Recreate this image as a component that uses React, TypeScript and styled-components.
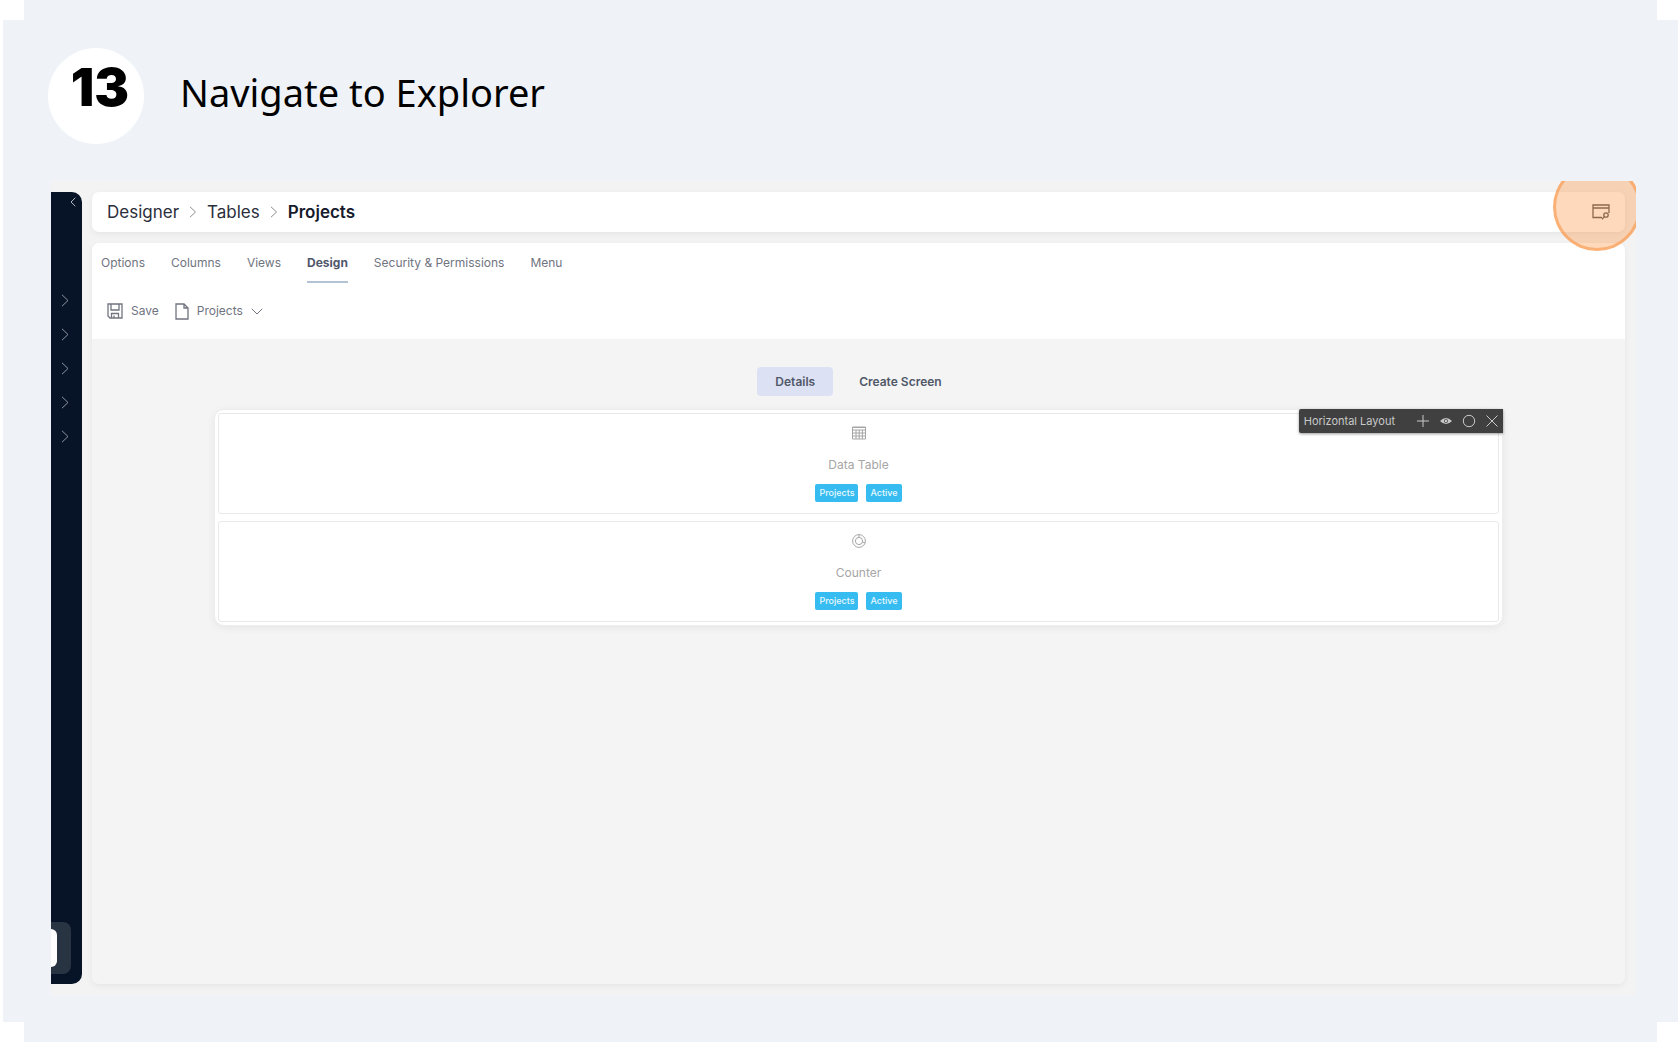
import React from "react";
import styled, { createGlobalStyle } from "styled-components";

const GlobalStyle = createGlobalStyle`
  *, *::before, *::after { box-sizing: border-box; }
  body { margin: 0; background: #fff; font-family: Inter, "Liberation Sans", sans-serif; }
  button { font: inherit; color: inherit; background: none; border: 0; padding: 0; margin: 0; cursor: pointer; }
  a { color: inherit; text-decoration: none; }
  svg { display: block; flex: none; }
`;

const Page = styled.div`
  display: flex;
  min-height: 100vh;
  padding: 0 2px 6px 3px;
`;

const StepCard = styled.article`
  position: relative;
  flex: 1;
  min-width: 0;
  display: flex;
  flex-direction: column;
  padding: 48px 42px 47px 48px;
  background: #eff3f8;
`;

const Corner = styled.span<{ $v: "top" | "bottom"; $h: "left" | "right" }>`
  position: absolute;
  ${(p) => p.$v}: 0;
  ${(p) => p.$h}: 0;
  width: 21px;
  height: 20px;
  background: #fff;
`;

const StepHeader = styled.header`
  display: flex;
  align-items: flex-start;
  gap: 36px;
  margin: 0 0 37px -3px;
`;

const StepNumber = styled.span`
  width: 96px;
  height: 96px;
  padding-top: 10px;
  padding-left: 8px;
  border-radius: 50%;
  background: #fff;
  color: #000;
  font-size: 52px;
  line-height: 60px;
  font-weight: 900;
  text-align: center;
`;

const StepTitle = styled.h1`
  margin: 0;
  padding-top: 17px;
  color: #000;
  font-family: "Noto Sans", sans-serif;
  font-size: 38px;
  line-height: 54px;
  font-weight: 400;
`;

const Screen = styled.section`
  position: relative;
  flex: 1;
  display: flex;
  gap: 10px;
  padding: 11px 11px 11px 0;
  overflow: hidden;
  background: #f3f3f3;
`;

const Sidebar = styled.nav`
  width: 31px;
  flex: none;
  display: flex;
  flex-direction: column;
  padding-bottom: 10px;
  border-radius: 0 10px 10px 0;
  background: #071427;
  color: #8d95a1;
`;

const CollapseButton = styled.button`
  align-self: flex-end;
  margin: 5px 6px 0 0;
`;

const SideList = styled.div`
  display: flex;
  flex-direction: column;
  align-items: center;
  gap: 20px;
  margin-top: 86px;
  padding-right: 3px;
`;

const SideButton = styled.button`
  height: 14px;
`;

const Account = styled.button`
  display: flex;
  align-items: center;
  width: 20px;
  height: 52px;
  margin-top: auto;
  border-radius: 0 8px 8px 0;
  background: #293443;
`;

const Avatar = styled.span`
  width: 6px;
  height: 38px;
  border-radius: 0 6px 6px 0;
  background: #fff;
`;

const Main = styled.div`
  flex: 1;
  min-width: 0;
  display: flex;
  flex-direction: column;
  gap: 11px;
`;

const TopBar = styled.div`
  display: flex;
  align-items: center;
  justify-content: space-between;
  height: 40px;
  padding: 0 15px;
  border-radius: 7px;
  background: #fff;
  box-shadow: 0 2px 6px rgba(0, 0, 0, 0.06);
`;

const Crumbs = styled.nav`
  display: flex;
  align-items: center;
  gap: 10px;
  color: #2b2e3b;
  font-size: 17px;
  line-height: 24px;
`;

const Crumb = styled.a<{ $current?: boolean }>`
  font-weight: ${(p) => (p.$current ? 600 : 400)};
  color: ${(p) => (p.$current ? "#161a2c" : "inherit")};
`;

const ExplorerButton = styled.button`
  color: #555;
`;

const Highlight = styled.span`
  position: absolute;
  top: -18px;
  right: -5px;
  width: 88px;
  height: 88px;
  border: 3px solid rgba(248, 150, 70, 0.6);
  border-radius: 50%;
  background: rgba(255, 145, 60, 0.34);
  pointer-events: none;
`;

const Workspace = styled.div`
  flex: 1;
  display: flex;
  flex-direction: column;
  border-radius: 7px;
  background: #f4f4f4;
  box-shadow: 0 2px 6px rgba(0, 0, 0, 0.06);
`;

const Controls = styled.div`
  height: 96px;
  padding: 7px 9px;
  border-radius: 7px 7px 0 0;
  background: #fff;
  color: #70747f;
  font-size: 12px;
  line-height: 24px;
`;

const Tabs = styled.div`
  display: flex;
  gap: 26px;
`;

const Tab = styled.button<{ $active?: boolean }>`
  height: 33px;
  padding-bottom: 6px;
  border-bottom: 2px solid ${(p) => (p.$active ? "#b3c3d6" : "transparent")};
  color: ${(p) => (p.$active ? "#50576b" : "inherit")};
  font-weight: ${(p) => (p.$active ? 700 : 400)};
`;

const Tools = styled.div`
  display: flex;
  gap: 16px;
  margin-top: 16px;
  padding-left: 6px;
`;

const ToolButton = styled.button`
  display: flex;
  align-items: center;
  gap: 8px;
`;

const Canvas = styled.div`
  padding: 28px 122px;
`;

const ScreenTabs = styled.div`
  display: flex;
  justify-content: center;
  gap: 8px;
  margin-bottom: 13px;
  color: #505869;
  font-size: 12px;
  line-height: 29px;
  font-weight: 600;
`;

const ScreenTab = styled.button<{ $active?: boolean }>`
  padding: 0 18px;
  border-radius: 4px;
  background: ${(p) => (p.$active ? "#dde1f4" : "transparent")};
`;

const LayoutPanel = styled.div`
  position: relative;
  display: flex;
  flex-direction: column;
  gap: 7px;
  padding: 3px;
  border: 1px solid #eee;
  border-radius: 10px;
  background: #fff;
  box-shadow: 0 2px 8px rgba(0, 0, 0, 0.06);
`;

const Widget = styled.div`
  display: flex;
  flex-direction: column;
  align-items: center;
  height: 101px;
  padding-top: 12px;
  border: 1px solid #e9e9e9;
  border-radius: 3px;
  color: #a6a6a6;
`;

const WidgetName = styled.span`
  margin: 15px 0 9px;
  font-size: 12px;
  line-height: 20px;
`;

const Tags = styled.div`
  display: flex;
  gap: 8px;
`;

const Tag = styled.span`
  padding: 0 4px;
  border-radius: 2px;
  background: #36bcf0;
  color: #e9f8fe;
  font-size: 9px;
  line-height: 18px;
  font-weight: 500;
`;

const LayoutBar = styled.div`
  position: absolute;
  top: -1px;
  right: -1px;
  display: flex;
  align-items: center;
  gap: 9px;
  height: 24px;
  padding: 0 4px 0 5px;
  border-radius: 2px 0 0 2px;
  background: #404040;
  color: #c9c9c9;
  font-size: 11px;
  box-shadow: 0 1px 3px rgba(0, 0, 0, 0.4);
`;

const LayoutName = styled.span`
  margin-right: 12px;
`;

const Icon = ({ w, h = w, children, sw = 1 }: { w: number; h?: number; sw?: number; children: React.ReactNode }) => (
  <svg width={w} height={h} viewBox={`0 0 ${w} ${h}`} fill="none" stroke="currentColor" strokeWidth={sw} aria-hidden="true">
    {children}
  </svg>
);

const CrumbArrow = () => (
  <Icon w={8} h={12}>
    <path d="M1 .8 6.500 6 1 11.200" stroke="#8b8b90" />
  </Icon>
);

const TableIcon = () => (
  <Icon w={14}>
    <path d="M.5 1h13v12H.5zM.5 4h13M.5 7h13M.5 10h13M4 4v9M7.200 4v9M10.400 4v9" />
    <path d="M.5 1.500h13" />
  </Icon>
);

const CounterIcon = () => (
  <Icon w={14}>
    <circle cx="7" cy="7" r="6.400" />
    <circle cx="7" cy="7" r="3.600" />
    <path d="M7 .6v3M10.400 8l2.800 1" />
  </Icon>
);

const widgets = [
  { name: "Data Table", icon: <TableIcon /> },
  { name: "Counter", icon: <CounterIcon /> },
];

const sections = ["Section 1", "Section 2", "Section 3", "Section 4", "Section 5"];
const tabs = ["Options", "Columns", "Views", "Design", "Security & Permissions", "Menu"];

export default function App() {
  return (
    <>
      <GlobalStyle />
      <Page>
        <StepCard>
          <Corner $v="top" $h="left" />
          <Corner $v="top" $h="right" />
          <Corner $v="bottom" $h="left" />
          <Corner $v="bottom" $h="right" />
          <StepHeader>
            <StepNumber>13</StepNumber>
            <StepTitle>Navigate to Explorer</StepTitle>
          </StepHeader>
          <Screen>
            <Sidebar>
              <CollapseButton aria-label="Collapse">
                <Icon w={6} h={10}>
                  <path d="M5.300.8 1 5l4.300 4.200" stroke="#b4bac2" />
                </Icon>
              </CollapseButton>
              <SideList>
                {sections.map((s) => (
                  <SideButton key={s} aria-label={s}>
                    <Icon w={8} h={13}>
                      <path d="M1 .8 7 6.500 1 12.200" />
                    </Icon>
                  </SideButton>
                ))}
              </SideList>
              <Account aria-label="Account">
                <Avatar />
              </Account>
            </Sidebar>
            <Main>
              <TopBar>
                <Crumbs aria-label="Breadcrumb">
                  <Crumb href="#designer">Designer</Crumb>
                  <CrumbArrow />
                  <Crumb href="#tables">Tables</Crumb>
                  <CrumbArrow />
                  <Crumb href="#projects" $current>Projects</Crumb>
                </Crumbs>
                <ExplorerButton aria-label="Explorer">
                  <Icon w={18} h={16} sw={1.3}>
                    <path d="M10 13.500H1V1h16v8M1 4h16" />
                    <circle cx="14" cy="11" r="2.200" />
                    <path d="m12.400 12.600-2.400 2.700" />
                  </Icon>
                </ExplorerButton>
              </TopBar>
              <Workspace>
                <Controls>
                  <Tabs role="tablist">
                    {tabs.map((t) => (
                      <Tab key={t} role="tab" aria-selected={t === "Design"} $active={t === "Design"}>
                        {t}
                      </Tab>
                    ))}
                  </Tabs>
                  <Tools>
                    <ToolButton>
                      <Icon w={16} sw={1.3}>
                        <path d="M1 1h14v14H3l-2-2zM4 1v6h8V1M4.500 15v-4.500h7V15M7 15v-2.500" />
                      </Icon>
                      Save
                    </ToolButton>
                    <ToolButton>
                      <Icon w={14} h={17} sw={1.3}>
                        <path d="M1 1h8l4 4v11H1zM9 1v4h4" />
                      </Icon>
                      Projects
                      <Icon w={12} h={7}>
                        <path d="M.8.8 6 6 11.200.8" />
                      </Icon>
                    </ToolButton>
                  </Tools>
                </Controls>
                <Canvas>
                  <ScreenTabs role="tablist">
                    <ScreenTab role="tab" aria-selected $active>Details</ScreenTab>
                    <ScreenTab role="tab" aria-selected={false}>Create Screen</ScreenTab>
                  </ScreenTabs>
                  <LayoutPanel>
                    {widgets.map((w) => (
                      <Widget key={w.name}>
                        {w.icon}
                        <WidgetName>{w.name}</WidgetName>
                        <Tags>
                          <Tag>Projects</Tag>
                          <Tag>Active</Tag>
                        </Tags>
                      </Widget>
                    ))}
                    <LayoutBar>
                      <LayoutName>Horizontal Layout</LayoutName>
                      <button aria-label="Add">
                        <Icon w={14}><path d="M7 1v12M1 7h12" /></Icon>
                      </button>
                      <button aria-label="Preview">
                        <Icon w={14}>
                          <path d="M1 7Q7 1 13 7 7 13 1 7z" fill="currentColor" stroke="none" />
                          <circle cx="7" cy="7" r="1.700" stroke="#666" />
                        </Icon>
                      </button>
                      <button aria-label="Select">
                        <Icon w={14}><circle cx="7" cy="7" r="5.700" /></Icon>
                      </button>
                      <button aria-label="Remove">
                        <Icon w={14}><path d="m1.500 1.500 11 11M12.500 1.500l-11 11" /></Icon>
                      </button>
                    </LayoutBar>
                  </LayoutPanel>
                </Canvas>
              </Workspace>
            </Main>
            <Highlight />
          </Screen>
        </StepCard>
      </Page>
    </>
  );
}
